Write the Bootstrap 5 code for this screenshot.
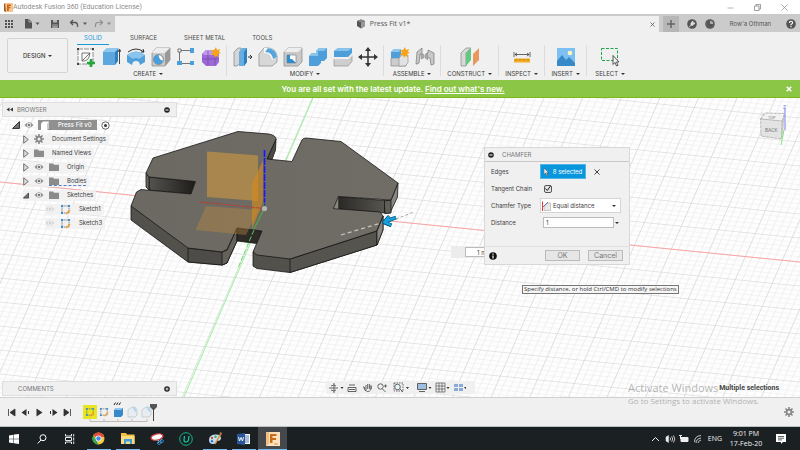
<!DOCTYPE html>
<html lang="en">
<head>
<meta charset="utf-8">
<meta name="viewport" content="width=device-width, initial-scale=1">
<title>Autodesk Fusion 360 (Education License)</title>
<link href="https://cdn.jsdelivr.net/npm/bootstrap@5.3.0/dist/css/bootstrap.min.css" rel="stylesheet">
<style>
  body { font-family: Inter, Roboto, "Liberation Sans", sans-serif; font-size: 6px; line-height: 8px; color: #3c3c3c; background: #f0f0f0; }
  svg { display: block; flex: none; }
  button, input, select { font: inherit; color: inherit; }
  .plain-btn { border: 0; background: none; padding: 0; display: flex; align-items: center; justify-content: center; }
  .titlebar { height: 16px; background: #fff; border-bottom: 2px solid #cacaca; font-family: Roboto, sans-serif; font-size: 7px; color: #8c8c8c; }
  .win-btn { margin-right: 20px; }
  .tabstrip { height: 16px; background: #cbcbcb; color: #555; }
  .quick-tools { width: 115px; }
  .doc-tab { background: #f0f0f0; font-family: "Open Sans", sans-serif; font-size: 7px; color: #555; }
  .account { width: 141px; }
  .new-tab { width: 16px; height: 16px; background: #b7b7b7; }
  .ribbon { height: 48px; background: #f0f0f0; }
  .design-btn { width: 61px; height: 35px; border: 1px solid #d4d4d4; border-radius: 2px; background: #f1f1f1; margin: 6px 5px 0 7px; font-weight: 500; }
  .ribbon-tabs { height: 13px; }
  .ribbon-tabs a { color: #4a4a4a; text-decoration: none; font-size: 6px; line-height: 12px; border-bottom: 1px solid transparent; text-align: center; margin-right: 27px; }
  .ribbon-tabs a.current { color: #1c9ad6; border-bottom: 1px solid #1c9ad6; width: 32px; margin-right: 21px; }
  .tool-group { border-right: 1px solid #dcdcdc; height: 31px; padding: 0 3px; }
  .tool-group:last-child { border-right: 0; }
  .tool-group .icon-row { height: 25px; }
  .tool-group .plain-btn { width: 25px; height: 24px; }
  .tool-group .group-name { width: 100%; height: 8px; white-space: nowrap; }
  .g-wide { width: 58px; } .g-mid { width: 46px; } .g-slim { width: 42px; }
  .caret { display: inline-block; border: 2px solid transparent; border-top-color: #333; border-bottom: 0; margin-left: 1px; vertical-align: 1px; }
  .update-bar { height: 18px; background: #8cc646; border-bottom: 1px solid #7db714; color: #fff; font-size: 8px; line-height: 12px; font-weight: 600; }
  .update-bar a { color: #fff; }
  .viewport { background: #fefefe; }
  .scene { position: absolute; inset: 0; width: 100%; height: 100%; }
  .panel-bar { width: 175px; height: 15px; background: #f0f0f0; border: 1px solid #dedede; color: #777; padding: 0 6px 0 3px; margin: 0 0 1px 2px; }
  .tree-row { height: 14px; }
  .tree-row.branch { padding-left: 23px; }
  .tree-row.leaf { padding-left: 45px; }
  .chip { background: rgba(240,240,240,.88); height: 11px; padding-right: 3px; gap: 5px; }
  .chip b { font-weight: 400; padding-left: 3px; }
  .hovered { border-bottom: 1px dashed #5b7fc4; gap: 5px; }
  .root-chip { background: #909090; color: #fff; font-weight: 500; height: 10px; padding: 0 5px 0 2px; }
  .navbar-mini { background: #f0f0f0; height: 13px; padding: 0 9px 0 2px; margin-bottom: 3px; }
  .dialog-box { position: absolute; left: 484px; top: 49px; width: 146px; background: #f0f0f0; border: 1px solid #d8d8d8; }
  .dialog-title { height: 14px; border-bottom: 1px solid #c9c9c9; color: #777; padding-left: 3px; }
  .field { height: 17px; }
  .field > label { width: 49px; flex: none; white-space: nowrap; }
  .dialog-body { padding: 1px 8px 0 6px; height: 84px; }
  .dialog-foot { padding: 3px 6px 3px 4px; }
  .pick-btn { background: #0a96dc; color: #fff; height: 15px; width: 46px; border: 1px solid #53b5e6; white-space: nowrap; }
  .type-box { background: #fff; border: 1px solid #d5d5d5; height: 15px; width: 82px; padding-left: 1px; }
  .type-box select { border: 0; background: none; appearance: none; padding: 0 0 0 2px; flex: 1; min-width: 0; }
  .dist { width: 71px; height: 11px; border: 1px solid #bcbcbc; background: #fff; padding: 0 2px; margin-left: 3px; }
  .tick { width: 8px; height: 8px; margin: 0; appearance: none; border: 1px solid #555; border-radius: 2px; background: #e4e4e4; display: inline-block; }
  .tick-wrap { position: relative; height: 8px; }
  .tick-wrap svg { position: absolute; left: 1px; top: 0; pointer-events: none; }
  .act { width: 35px; height: 11px; border: 1px solid #bbb; background: #e6e6e6; color: #777; padding: 0; font-size: 7px; line-height: 9px; }
  .mini-input { position: absolute; left: 451px; top: 148px; background: #ececec; height: 12px; padding: 1px 0 1px 14px; }
  .mini-input input { width: 24px; height: 10px; border: 1px solid #bbb; background: #fff; padding: 0 0 0 11px; }
  .tip { position: absolute; left: 522px; top: 187px; height: 9px; border: 1px solid #777; background: #f6f6f6; padding: 0 1px; line-height: 7px; white-space: nowrap; color: #333; font-family: "Open Sans", sans-serif; }
  .ghost-note { position: absolute; left: 628px; bottom: -10px; color: rgba(120,120,120,.55); font-family: "Open Sans", sans-serif; font-size: 8px; line-height: 12px; z-index: 3; white-space: nowrap; }
  .ghost-note strong { display: block; font-weight: 400; font-size: 11px; line-height: 14px; }
  .side { flex: 1 1 0; min-width: 0; }
  .picked { font-family: Roboto, sans-serif; font-size: 7px; font-weight: 700; color: #444; padding: 0 21px 5px 0; position: relative; z-index: 4; }
  .timeline { height: 30px; background: #f0f0f0; border-top: 1px solid #d0d0d0; border-bottom: 1px solid #bdc4c6; }
  .timeline .plain-btn { width: 14px; height: 14px; }
  .taskbar { height: 23px; background: #1b2023; color: #f2f2f2; font-family: "Open Sans", sans-serif; font-size: 7px; }
  .taskbar .plain-btn { width: 29px; height: 23px; }
  .taskbar .plain-btn.first { width: 28px; }
  .taskbar .plain-btn.open { background: linear-gradient(#76b9ed, #76b9ed) bottom / 24px 1px no-repeat; }
  .taskbar .plain-btn.active { background: linear-gradient(#76b9ed, #76b9ed) bottom / 100% 1px no-repeat #46494b; }
  .clock { line-height: 10px; width: 40px; }
  .notice { margin: 0 14px 0 10px; }
</style>
<script src="https://cdn.jsdelivr.net/npm/bootstrap@5.3.0/dist/js/bootstrap.bundle.min.js"></script>
</head>
<body>
<svg width="0" height="0" class="position-absolute" aria-hidden="true">
  <symbol id="eye" viewBox="0 0 10 8"><path d="M.5 4Q5-1.500 9.500 4 5 9.500.5 4Z" fill="#8c8c8c"/><circle cx="5" cy="4" r="2.200" fill="#f0f0f0"/><circle cx="5" cy="4" r="1.300" fill="#777"/></symbol>
  <symbol id="folder" viewBox="0 0 10 8"><path d="M0 .5h4l1 1.200h5V8H0Z" fill="#8b8b8b"/></symbol>
  <symbol id="closed" viewBox="0 0 6 9"><path d="M.7.8 5.300 4.500.7 8.200Z" fill="#ddd" stroke="#555" stroke-width=".8"/></symbol>
  <symbol id="opened" viewBox="0 0 7 7"><path d="M6.500.5v6h-6Z" fill="#777" stroke="#222" stroke-width=".8"/></symbol>
  <symbol id="sketch" viewBox="0 0 11 11"><path d="M2 2h7v7H2Z" fill="none" stroke="#555" stroke-width=".7" stroke-dasharray="1.500 .7"/><path d="M1 1h2v2H1ZM8 1h2v2H8ZM1 8h2v2H1Z" fill="#3c8fd0"/><path d="m5.500 9.500 4-4 1 1-4 4Z" fill="#f39b35"/></symbol>
  <symbol id="cog" viewBox="0 0 10 10"><path d="M5 0v10M0 5h10M1.500 1.500l7 7M8.500 1.500l-7 7" stroke="#888" stroke-width="1.600"/><circle cx="5" cy="5" r="3.300" fill="#888"/><circle cx="5" cy="5" r="1.500" fill="#f0f0f0"/></symbol>
</svg>

<div class="d-flex flex-column vh-100 overflow-hidden">
  <header class="titlebar d-flex align-items-center px-1 flex-shrink-0">
    <svg width="9" height="9" viewBox="0 0 9 9"><path d="M1 0h8v9H1Z" fill="#f8c48e"/><path d="M1 0 0 1v7l2 1Z" fill="#9b5b26"/><path d="M3 1.500h4v1.500H4.800v1H6.500v1.300H4.800V8H3Z" fill="#c96713"/></svg>
    <span class="flex-grow-1">Autodesk Fusion 360 (Education License)</span>
    <button class="plain-btn win-btn" aria-label="Minimize"><svg width="7" height="7" viewBox="0 0 7 7"><path d="M.5 4h6" stroke="#999" stroke-width=".7"/></svg></button>
    <button class="plain-btn win-btn" aria-label="Restore"><svg width="7" height="7" viewBox="0 0 7 7"><path d="M.5 2h4.500v4.500H.5ZM2 2V.5h4.500V5H5" fill="none" stroke="#777" stroke-width=".7"/></svg></button>
    <button class="plain-btn me-2" aria-label="Close"><svg width="7" height="7" viewBox="0 0 7 7"><path d="m.5.5 6 6m0-6-6 6" stroke="#888" stroke-width=".7"/></svg></button>
  </header>

  <div class="tabstrip d-flex flex-shrink-0">
    <div class="quick-tools d-flex align-items-center">
      <svg width="115" height="14" viewBox="0 0 115 14"><g fill="#555"><path d="M5 3h2v2H5Zm3 0h2v2H8Zm3 0h2v2h-2ZM5 6h2v2H5Zm3 0h2v2H8Zm3 0h2v2h-2ZM5 9h2v2H5Zm3 0h2v2H8Zm3 0h2v2h-2ZM25 2h4l3 3v6.500h-7Z"/><path d="M29 2v3h3" fill="none" stroke="#ccc" stroke-width=".7"/><path d="m35.500 5.500 4 0-2 2.500ZM83 5.500h4L85 8Z"/><path d="M107 5.500h4L109 8Z" fill="#888"/><path d="M51 3h8v8h-8Z"/><path d="M53 3h4v2.500h-4ZM52.500 7.500h5V11h-5Z" fill="#bbb"/><path d="M53 8.500h4M53 10h4" stroke="#555" stroke-width=".6"/></g><path d="m73 3-2.500 2.500L73 8M71 5.500h4q3 0 2.500 4.500" fill="none" stroke="#555" stroke-width="1.300"/><path d="m100 3 2.500 2.500L100 8M102 5.500h-4q-3 0-2.500 4.500" fill="none" stroke="#909090" stroke-width="1.200"/></svg>
    </div>
    <div class="doc-tab flex-grow-1 d-flex align-items-center justify-content-center position-relative">
      <svg width="10" height="10" viewBox="0 0 10 10" class="me-1"><path d="M1 2 5 .5 9 2v5L5 9.500 1 7Z" fill="#555"/><path d="M1 2 5 3.500 9 2 5 .5Z" fill="#888"/><path d="M5 3.500 9 2v5L5 9.500Z" fill="#999"/></svg>
      <span class="me-2">Press Fit v1*</span>
      <button class="plain-btn position-absolute end-0 me-1" aria-label="Close tab"><svg width="5" height="5" viewBox="0 0 5 5"><path d="m.5.5 4 4m0-4-4 4" stroke="#555" stroke-width=".8"/></svg></button>
    </div>
    <div class="account d-flex align-items-center ps-1">
      <button class="new-tab plain-btn" aria-label="New tab"><svg width="8" height="8" viewBox="0 0 8 8"><path d="M4 0v8M0 4h8" stroke="#666" stroke-width="1.500"/></svg></button>
      <svg class="ms-2" width="10" height="10" viewBox="0 0 10 10"><circle cx="5" cy="5" r="4.800" fill="#555"/><path d="M2 8 5 5.500M4 4l2-2v2h2L6 6.200H4Z" stroke="#ddd" fill="#ddd" stroke-width=".8"/></svg>
      <svg class="ms-2" width="10" height="10" viewBox="0 0 10 10"><circle cx="5" cy="5" r="4.800" fill="#555"/><circle cx="5" cy="5" r="3.300" fill="#aaa"/><path d="M5 1.700V5h3.300A3.300 3.300 0 1 1 5 1.700Z" fill="#555"/></svg>
      <span class="flex-grow-1 text-center text-nowrap">Row'a Othman</span>
      <svg class="me-1" width="10" height="10" viewBox="0 0 10 10"><circle cx="5" cy="5" r="4.800" fill="#555"/><path d="M3.400 4Q3.400 2.300 5 2.300t1.600 1.500Q6.600 4.700 5 5.500v.7M5 7v1.200" fill="none" stroke="#fff" stroke-width="1.100"/></svg>
    </div>
  </div>

  <div class="ribbon d-flex flex-shrink-0">
    <button class="design-btn flex-shrink-0">DESIGN <i class="caret"></i></button>
    <div class="flex-grow-1">
      <nav class="ribbon-tabs d-flex">
        <a class="current ms-1" href="#">SOLID</a>
        <a href="#">SURFACE</a>
        <a href="#">SHEET METAL</a>
        <a href="#">TOOLS</a>
      </nav>
      <div class="d-flex">
        <section class="tool-group ps-0">
          <div class="icon-row d-flex">
            <button class="plain-btn" aria-label="Create sketch"><svg width="20" height="20" viewBox="0 0 20 20"><path d="M2 2h15v15H2Z" fill="#fafafa" stroke="#777" stroke-width=".8" stroke-dasharray="5 1"/><path d="M1 1h2v2H1ZM16 1h2v2h-2ZM1 16h2v2H1Z" fill="#444"/><path d="M6 6v8q7 1 8-8ZM6 14 14 6" fill="none" stroke="#555" stroke-width=".8"/><path d="M15 12v8M11 16h8" stroke="#23a63c" stroke-width="2.600"/></svg></button>
            <button class="plain-btn" aria-label="Extrude"><svg width="20" height="20" viewBox="0 0 20 20"><path d="M2 5 6 1h12l-4 4v13H2Z" fill="#5ca8de"/><path d="M2 5 6 1h12l-4 4Z" fill="#8fc8ef"/><path d="M14 5 17 2v12l-3 4Z" fill="#2d7fbe"/><path d="M18.500 17V3m-1.500 2 1.500-3L20 5" fill="none" stroke="#333" stroke-width=".9"/></svg></button>
            <button class="plain-btn" aria-label="Revolve"><svg width="20" height="20" viewBox="0 0 20 20"><path d="M1 8Q10 1 19 8v7l-5 3-1-3q-3-2-6 0l-1 3-5-3Z" fill="#4f9fd9"/><path d="M1 8Q10 1 19 8l-6 4q-3-2-6 0Z" fill="#88c4ed"/><path d="M2 5Q10-1 18 5m-1-3 1 3-3 0" fill="none" stroke="#333" stroke-width="1"/></svg></button>
            <button class="plain-btn" aria-label="Hole"><svg width="20" height="20" viewBox="0 0 20 20"><path d="m1 6 4-5h14v12l-5 6H1Z" fill="#c7c9ca" stroke="#888" stroke-width=".7"/><path d="M1 6 5 1h14l-5 5Z" fill="#ececec"/><path d="m14 6 5-5v12l-5 6Z" fill="#999"/><circle cx="7.500" cy="12.500" r="4.800" fill="#fff" stroke="#666" stroke-width=".8"/><path d="M7.500 7.700a4.800 4.800 0 1 0 4.500 6Q8 13 7.500 7.700Z" fill="#4a9edb"/></svg></button>
            <button class="plain-btn" aria-label="Pattern"><svg width="20" height="20" viewBox="0 0 20 20"><path d="M5 3.500h10M3.500 5v10M5 16.500h10" stroke="#555" stroke-width=".8" fill="none"/><path d="M2 2h3v3H2Z" fill="#fff" stroke="#555" stroke-width=".8"/><path d="M14 1h4v5h-4ZM1 14h5v4H1ZM14 14h4v4h-4Z" fill="#4a9edb"/></svg></button>
            <button class="plain-btn" aria-label="Create form"><svg width="20" height="20" viewBox="0 0 20 20"><path d="m1 7 4-4h9l4 4v8l-3 4H5l-4-4Z" fill="#9b6ad4"/><path d="m1 7 4-4h9l1 3-3 2H4Z" fill="#c09ae9"/><path d="M7 4v14M1 12h16M14 7v11" stroke="#7543b2" stroke-width=".7"/><path d="m15 0 1 3 3-1-1 3 2 1-3 1 1 3-3-1-1 2-1-3-3 0 2-3-2-2 3 0Z" fill="#f6a21b"/></svg></button>
          </div>
          <div class="group-name text-center">CREATE <i class="caret"></i></div>
        </section>
        <section class="tool-group">
          <div class="icon-row d-flex">
            <button class="plain-btn" aria-label="Press pull"><svg width="20" height="20" viewBox="0 0 20 20"><path d="m1 5 4-4h3v14l-4 4H1Z" fill="#d5d5d5" stroke="#777" stroke-width=".6"/><path d="m6 5 3-4h5v14l-3 4H6Z" fill="#65aee2"/><path d="m11 5 3-4v14l-3 4Z" fill="#2d7fbe"/><path d="M15 10h4m-2-2 2 2-2 2" stroke="#333" fill="none"/></svg></button>
            <button class="plain-btn" aria-label="Fillet"><svg width="20" height="20" viewBox="0 0 20 20"><path d="M1 7 6 1h5q7 1 8 8v6l-5 4H1Z" fill="#d7d7d7" stroke="#888" stroke-width=".7"/><path d="M6 1h5q7 1 8 9l-5 3q-1-7-8-7Z" fill="#fafafa"/><path d="M10 1q8 1 9 9l-4 2Q14 5 7 5Z" fill="#55a5dc"/></svg></button>
            <button class="plain-btn" aria-label="Shell"><svg width="20" height="20" viewBox="0 0 20 20"><path d="m1 5 4-4h14v14l-4 4H1Z" fill="#c9c9c9" stroke="#888" stroke-width=".7"/><path d="M1 5 5 1h14l-4 4Z" fill="#eee"/><path d="M4 8h9v8H4Z" fill="#f6f9fb" stroke="#777" stroke-width=".6"/><path d="M4 8v8h9l-4-4H7V8Z" fill="#2f8ccd"/></svg></button>
            <button class="plain-btn" aria-label="Combine"><svg width="20" height="20" viewBox="0 0 20 20"><path d="M1 9 4 6h4V4l3-3h8v10l-3 3h-3v2l-3 3H1Z" fill="#4e9fd9"/><path d="M1 9 4 6h4V4l3-3h8l-3 3h-6v5Z" fill="#88c3ec"/></svg></button>
            <button class="plain-btn" aria-label="Split body"><svg width="20" height="20" viewBox="0 0 20 20"><path d="m1 4 4-3h14v5l-4 4H1Z" fill="#4e9fd9"/><path d="m1 4 4-3h14l-4 3Z" fill="#88c3ec"/><path d="m1 12 14-.5 4-3v6l-4 4.500H1Z" fill="#cecece" stroke="#888" stroke-width=".6"/><path d="m1 12 14-.5 4-3" fill="none" stroke="#fff"/></svg></button>
            <button class="plain-btn" aria-label="Move"><svg width="20" height="20" viewBox="0 0 20 20"><path d="M10 3v14M3 10h14" stroke="#333" stroke-width="1.500"/><path d="m10 0 3 4H7ZM10 20l3-4H7ZM0 10l4-3v6ZM20 10l-4-3v6Z" fill="#333"/></svg></button>
          </div>
          <div class="group-name text-center">MODIFY <i class="caret"></i></div>
        </section>
        <section class="tool-group">
          <div class="icon-row d-flex">
            <button class="plain-btn" aria-label="New component"><svg width="20" height="20" viewBox="0 0 20 20"><path d="M1 11h15v8H1Z" fill="#ccc" stroke="#888" stroke-width=".7"/><path d="m9 11 3-3h6v8l-3 3H9Z" fill="#e2e2e2" stroke="#888" stroke-width=".6"/><path d="m1 5 3-3h7v6l-2 3H1Z" fill="#4e9fd9"/><path d="m1 5 3-3h7L9 5Z" fill="#8fc8ef"/><path d="m15 0 1 3 3-1-1 3 2 1-3 1 1 3-3-1-1 2-1-3-3 0 2-3-2-2 3 0Z" fill="#f6a21b"/></svg></button>
            <button class="plain-btn" aria-label="Joint"><svg width="20" height="20" viewBox="0 0 20 20"><path d="m2 5 5-4v6H5l-1 9-2 1H1ZM13 3l6 3v11l-3 1-1-7-3-1V6h1Z" fill="#c6c8ca" stroke="#777" stroke-width=".7"/><path d="M6 7q3-1 3 2t-3 3ZM12 6q-3 1-2 5l3 2Z" fill="#aaa" stroke="#888" stroke-width=".5"/></svg></button>
          </div>
          <div class="group-name text-center">ASSEMBLE <i class="caret"></i></div>
        </section>
        <section class="tool-group g-wide">
          <div class="icon-row d-flex justify-content-center">
            <button class="plain-btn" aria-label="Construct plane"><svg width="20" height="20" viewBox="0 0 20 20"><path d="m1 6 5-5h5L6 6v13H1Z" fill="#d8d8d8" stroke="#888" stroke-width=".7"/><path d="m6 6 5-5v12l-5 6Z" fill="#5fca80"/><path d="m13 7 6-6v12l-6 6Z" fill="#e9995f"/></svg></button>
          </div>
          <div class="group-name text-center">CONSTRUCT <i class="caret"></i></div>
        </section>
        <section class="tool-group g-mid">
          <div class="icon-row d-flex justify-content-center">
            <button class="plain-btn" aria-label="Measure"><svg width="18" height="20" viewBox="0 0 18 20"><path d="M1 5v5M17 5v5M2 7.500h14M4 6 2 7.500 4 9M14 6l2 1.500L14 9" stroke="#444" stroke-width=".8" fill="none"/><path d="M1 11.500h16v4H1Z" fill="#f5ac27"/><path d="M3 12v2m2-2v1m2-1v2m2-2v1m2-1v2m2-2v1m2-1v2" stroke="#925d00" stroke-width=".5"/></svg></button>
          </div>
          <div class="group-name text-center">INSPECT <i class="caret"></i></div>
        </section>
        <section class="tool-group g-slim">
          <div class="icon-row d-flex justify-content-center">
            <button class="plain-btn" aria-label="Insert image"><svg width="18" height="18" viewBox="0 0 18 18"><path d="M0 0h18v18H0Z" fill="#7cbff3"/><path d="m0 13 5-6 4 5 3-3 6 6v3H0Z" fill="#3789c8"/><circle cx="13" cy="5" r="2.300" fill="#fdf6bb"/></svg></button>
          </div>
          <div class="group-name text-center">INSERT <i class="caret"></i></div>
        </section>
        <section class="tool-group g-mid">
          <div class="icon-row d-flex justify-content-center">
            <button class="plain-btn" aria-label="Select"><svg width="20" height="20" viewBox="0 0 20 20"><path d="M1.500 1.500h16v12h-16Z" fill="none" stroke="#1fa64a" stroke-dasharray="3 1.500"/><path d="M13 8.500v9l2-2 1.500 3.500 1.500-.7-1.500-3.300H19Z" fill="#eee" stroke="#333" stroke-width=".8"/></svg></button>
          </div>
          <div class="group-name text-center">SELECT <i class="caret"></i></div>
        </section>
      </div>
    </div>
  </div>

  <div class="update-bar d-flex align-items-center flex-shrink-0">
    <div class="flex-grow-1 text-center">You are all set with the latest update. <a href="#">Find out what's new.</a></div>
    <button class="plain-btn me-2" aria-label="Dismiss"><svg width="6" height="6" viewBox="0 0 6 6"><path d="m.7.7 4.600 4.600m0-4.600L.7 5.300" stroke="#fff" stroke-width="1.400"/></svg></button>
  </div>

  <main class="viewport flex-grow-1 position-relative d-flex flex-column">
    <svg class="scene" viewBox="0 98 800 299" preserveAspectRatio="xMidYMid slice" aria-label="Model view">
      <defs>
        <pattern id="grid" width="50" height="50" patternUnits="userSpaceOnUse" patternTransform="matrix(.74 .074 -.2 .46 264 208)">
          <path d="M10 0v50M20 0v50M30 0v50M40 0v50M0 10h50M0 20h50M0 30h50M0 40h50" stroke="#efeff0" stroke-width="1.400"/>
          <path d="M0 .6h50M.6 0v50" stroke="#d2d2d4" stroke-width="1.200"/>
        </pattern>
        <linearGradient id="top" x1="0" x2="1" y1="0" y2="0"><stop offset="0" stop-color="#6c6963"/><stop offset="1" stop-color="#706d66"/></linearGradient>
        <linearGradient id="slot" x1="0" x2="1" y1="0" y2="0"><stop offset="0" stop-color="#55534e"/><stop offset="1" stop-color="#1d1c1a"/></linearGradient>
        <linearGradient id="slot2" x1="0" x2="1" y1="0" y2="0"><stop offset="0" stop-color="#252421"/><stop offset="1" stop-color="#57554f"/></linearGradient>
      </defs>
      <rect y="98" width="800" height="299" fill="url(#grid)"/>
      <path d="M0 182 800 262" stroke="#ff9c9c" stroke-width=".9"/>
      <path d="M313 98 184 397" stroke="#8ff08f" stroke-width=".9"/>
      <g stroke="#171716" stroke-width=".8" stroke-linejoin="round">
        <path d="M131 206v14l57 42 34 3 5-2 10-22 3-14ZM253 252v14l4 2.500 33 4 87-27.500 6-15v-14l-7 13Z" fill="#53514c"/>
        <path d="M290 259v13.500l87-27.500v-14Z" fill="#56544f"/><path d="m377 231 6-15v14l-6 15Z" fill="#8a8780"/>
        <path d="m188 248v14l34 3 5-2v-14l-5 3Z" fill="#4e4c48"/><path d="M222 252v13l5-2 10-22v-13l-10 22Z" fill="#64615b"/>
        <path d="m237 228 25 3-5 12.500-20-2.500Z" fill="#2c2b28"/>
        <path d="m267 159 9-20-.5 11-3.500 9.500Z" fill="#4b4944"/>
        <path d="m398 183-7 17-7 1v12h6l7.500-16Z" fill="#8a8780"/><path d="m384 201 7-1v13l-6 .5Z" fill="#605e58"/>
        <path d="m149 177 46.500 4.500L191 194l-42-4Z" fill="url(#slot)"/><path d="m146 173 3 4v13l-3-3Z" fill="#6a6761"/>
        <path d="m338.500 196.500 46 4V213l-51-4.500Z" fill="url(#slot2)"/>
        <path d="m153 158 85-26.500 31 2.500q7 1.500 7 5l-9 20 25 2.500 10-21.500q1-2 4-2l35 3.500 57 41.500-7 17-52.500-3.500-5 12 46.500 3.500 3 4-6.300 15L290 259l-33-4-4-3 9-21-25-3-10 21.500-5 2.500-34-4-57-42 5.500-14 4.500-2.500L191 194l4.500-12.500L149 177l-3-4Z" fill="url(#top)"/>
        <path d="m338.500 196.500-5 12 5 .5Z" fill="#8a867c" stroke-width=".4"/>
      </g>
      <path d="m207 151.500 51 4V201l-51-4Z" fill="#dfa13a" fill-opacity=".52"/>
      <path d="m206 206 52 4-12 25-50.500-5Z" fill="#c18c3b" fill-opacity=".38"/>
      <path d="m252 184 11-24v42l-11 27Z" fill="#d28a1d" fill-opacity=".65"/>
      <path d="m200 202 64 6.500" stroke="#ba3c32" stroke-width=".9" stroke-dasharray="9 1 3 1"/>
      <path d="m264 209-10 20" stroke="#3ec43e" stroke-width=".9"/><path d="m254 230-16 38" stroke="#62d762" stroke-width=".9" stroke-dasharray="5 2"/>
      <path d="M264.500 150v52" stroke="#1717ff" stroke-width="1.600" stroke-dasharray="7 1"/><path d="M264.500 202v4" stroke="#2b3fa8"/>
      <circle cx="264.500" cy="208.500" r="2.600" fill="#b5b5b0"/>
      <path d="m341 235 40-12" stroke="#c4c2bd" stroke-width="1.300" stroke-dasharray="4 3"/><path d="m396 219 18-7" stroke="#aaa" stroke-dasharray="3 2"/>
      <path d="m396 217.500-10 3.800m3.500-5-5.500 6 7.500 3" fill="none" stroke="#07567f" stroke-width="4" stroke-linejoin="round"/><path d="m395.500 217.700-9.500 3.600m3.300-4.600-5 5.400 7 2.900" fill="none" stroke="#18a0dc" stroke-width="2.500" stroke-linejoin="round"/>
      <g>
        <path d="m761 112 24 3-2 24-22-2Z" fill="#c8c8c8" opacity=".35"/>
        <path d="m760.500 119 5-6 19 .5-2.500 8Z" fill="#f2f2f2" stroke="#888" stroke-width=".6" stroke-dasharray="3 1"/>
        <path d="m760.500 119 21.500 2-.5 18-20.500-3Z" fill="#e3e3e3" stroke="#999" stroke-width=".6" stroke-dasharray="3 1"/>
        <path d="m782 121 2.500-7.500-1.500 17-1.500 8Z" fill="#c3c3c3"/>
        <text x="765" y="132" font-size="5" fill="#777" font-family="Roboto">BACK</text><text x="768" y="118.500" font-size="4" fill="#888" font-family="Roboto">TOP</text>
        <path d="M785 108v22" stroke="#8080f0"/><path d="m784 130-3 15" stroke="#7aec7a"/><text x="783" y="109" font-size="5" fill="#8080f0" font-family="Roboto">Z</text>
      </g>
    </svg>

    <div class="position-relative flex-grow-1 pt-1">
      <div class="panel-bar d-flex align-items-center">
        <svg width="7" height="5" viewBox="0 0 7 5"><path d="M3.500.5v4l-3-2ZM7 .5v4l-3-2Z" fill="#333"/></svg>
        <span class="flex-grow-1 ps-1">BROWSER</span>
        <svg width="6" height="6" viewBox="0 0 6 6"><circle cx="3" cy="3" r="2.800" fill="#222"/><path d="M1.500 3h3" stroke="#fff"/></svg>
      </div>
      <ul class="list-unstyled mb-0">
        <li class="tree-row d-flex align-items-center ps-2 ms-1">
          <svg width="8" height="8"><use href="#opened"/></svg>
          <svg class="ms-1 me-1" width="10" height="8"><use href="#eye"/></svg>
          <span class="root-chip d-flex align-items-center"><svg width="10" height="9" viewBox="0 0 10 9" class="me-2"><path d="m1 2.500 2-2h6V7L7 9H1Z" fill="#fff"/><path d="m7 2.500 2-2V7L7 9Z" fill="#ccc"/></svg>Press Fit v0</span>
          <svg class="ms-1" width="9" height="9" viewBox="0 0 9 9"><circle cx="4.500" cy="4.500" r="3.700" fill="#f7f7f7" stroke="#444" stroke-width=".8"/><circle cx="4.500" cy="4.500" r="1.500" fill="#333"/></svg>
        </li>
        <li class="tree-row branch d-flex align-items-center"><span class="chip d-flex align-items-center"><svg width="6" height="9"><use href="#closed"/></svg><svg width="10" height="10"><use href="#cog"/></svg><b>Document Settings</b></span></li>
        <li class="tree-row branch d-flex align-items-center"><span class="chip d-flex align-items-center"><svg width="6" height="9"><use href="#closed"/></svg><svg width="10" height="8"><use href="#folder"/></svg><b>Named Views</b></span></li>
        <li class="tree-row branch d-flex align-items-center"><span class="chip d-flex align-items-center"><svg width="6" height="9"><use href="#closed"/></svg><svg width="10" height="8"><use href="#eye"/></svg><svg width="10" height="8"><use href="#folder"/></svg><b>Origin</b></span></li>
        <li class="tree-row branch d-flex align-items-center"><span class="chip d-flex align-items-center"><svg width="6" height="9"><use href="#closed"/></svg><svg width="10" height="8"><use href="#eye"/></svg><span class="hovered d-flex"><svg width="10" height="8"><use href="#folder"/></svg><b>Bodies</b></span></span></li>
        <li class="tree-row branch d-flex align-items-center"><span class="chip d-flex align-items-center"><svg width="6" height="7"><use href="#opened"/></svg><svg width="10" height="8"><use href="#eye"/></svg><svg width="10" height="8"><use href="#folder"/></svg><b>Sketches</b></span></li>
        <li class="tree-row leaf d-flex align-items-center"><span class="chip d-flex align-items-center"><svg class="opacity-25" width="10" height="8"><use href="#eye"/></svg><svg width="11" height="11"><use href="#sketch"/></svg><b>Sketch1</b></span></li>
        <li class="tree-row leaf d-flex align-items-center"><span class="chip d-flex align-items-center"><svg class="opacity-25" width="10" height="8"><use href="#eye"/></svg><svg width="11" height="11"><use href="#sketch"/></svg><b>Sketch3</b></span></li>
      </ul>
    </div>

    <div class="position-relative d-flex align-items-end">
      <div class="side"><div class="panel-bar d-flex align-items-center"><span class="flex-grow-1 ps-2 ms-1">COMMENTS</span><svg width="6" height="6" viewBox="0 0 6 6"><circle cx="3" cy="3" r="2.800" fill="#222"/><path d="M1.500 3h3M3 1.500v3" stroke="#fff" stroke-width=".8"/></svg></div></div>
      <div class="navbar-mini">
        <svg width="138" height="13" viewBox="327 381 138 13"><g fill="none" stroke="#555" stroke-width=".9"><path d="M333 383v10M328 388h9M330 386q3-2 5 0M330 390q3 2 5 0"/><path d="M348 385h6M347 387.500h8v4h-8ZM348 389.500h6"/><path d="m364 389-1-2m2 3v-5m1.700 4v-5m1.700 5v-5m1.600 5v-3.500q1 6-3.500 6-3 0-4-5"/><circle cx="379.500" cy="386.500" r="2.700"/><path d="m381.500 389 3 3M383 386h3m-1.500-1.500v3"/><path d="M393 383h9v8h-9Z" stroke-dasharray="1.500 1"/><circle cx="396.500" cy="387" r="2.800" fill="#e5f4f7"/><path d="m399 389 3 3"/><path d="M416.500 383.500h9v6h-9Z" fill="#9cbee1"/><path d="M418 391.500h6"/><path d="M435 383h9v9h-9ZM438 383v9m3-9v9M435 386h9m-9 3h9" stroke-width=".7"/></g><path d="M453 384h4v3h-4ZM458 384h4v3h-4ZM453 388h4v3h-4ZM458 388h4v3h-4Z" fill="#8aabd6"/><path d="M339.500 387h3l-1.500 2ZM405 387h3l-1.500 2ZM427.500 387h3l-1.500 2ZM445.500 387h3l-1.500 2ZM463 387h3l-1.500 2Z" fill="#333"/></svg>
      </div>
      <div class="side"><div class="picked text-end">Multiple selections</div></div>
    </div>

    <div class="mini-input"><input type="text" value="1 mm" aria-label="Distance on canvas"></div>

    <section class="dialog-box" role="dialog" aria-label="Chamfer">
      <div class="dialog-title d-flex align-items-center"><svg class="me-2" width="6" height="6" viewBox="0 0 6 6"><circle cx="3" cy="3" r="2.800" fill="#222"/><path d="M1.500 3h3" stroke="#fff"/></svg>CHAMFER</div>
      <div class="dialog-body">
        <div class="field d-flex align-items-center"><label for="edges">Edges</label><button id="edges" class="pick-btn plain-btn"><svg class="me-1" width="5" height="8" viewBox="0 0 5 8"><path d="M0 0v6.500L1.500 5l1.200 2.700 1-.5L2.500 4.700h2.300Z" fill="#e8e8e8" stroke="#333" stroke-width=".4"/></svg>8 selected</button><button class="plain-btn ms-1 ps-1" aria-label="Clear edges"><svg width="6" height="6" viewBox="0 0 6 6"><path d="m.5.5 5 5m0-5-5 5" stroke="#444"/></svg></button></div>
        <div class="field d-flex align-items-center"><label for="tangent">Tangent Chain</label><span class="tick-wrap d-flex align-items-center ms-1"><input class="tick" id="tangent" type="checkbox" checked><svg width="7" height="7" viewBox="0 0 7 7"><path d="m.5 3.500 1.800 2L5.500 1" fill="none" stroke="#222"/></svg></span></div>
        <div class="field d-flex align-items-center"><label for="ctype">Chamfer Type</label><div class="type-box d-flex align-items-center"><svg width="9" height="10" viewBox="0 0 9 10"><path d="M.5 10V.5" stroke="#e33"/><path d="M2 9.500V6l4-4h2.500v7.500Z" fill="#e8e8e8" stroke="#999" stroke-width=".5"/><path d="m1 6 5-5" stroke="#335a9c" stroke-width=".8"/></svg><select id="ctype"><option>Equal distance</option></select><i class="caret me-1"></i></div></div>
        <div class="field d-flex align-items-center"><label for="dist">Distance</label><input id="dist" class="dist" type="text" value="1"><i class="caret"></i></div>
      </div>
      <div class="dialog-foot d-flex align-items-center border-top">
        <svg width="8" height="8" viewBox="0 0 8 8"><circle cx="4" cy="4" r="3.800" fill="#111"/><path d="M4 3.500v3M4 1.500v1.200" stroke="#fff" stroke-width="1.200"/></svg>
        <button class="act ms-auto me-1">OK</button><button class="act ms-1">Cancel</button>
      </div>
    </section>
    <div class="tip" role="tooltip">Specify distance, or hold Ctrl/CMD to modify selections</div>
    <div class="ghost-note"><strong>Activate Windows</strong>Go to Settings to activate Windows.</div>
  </main>

  <div class="timeline d-flex align-items-center flex-shrink-0 ps-1">
    <button class="plain-btn" aria-label="To start"><svg width="9" height="9" viewBox="0 0 9 9"><path d="M1.500 1v7M8 1v7L3 4.500Z" fill="#333" stroke="#333" stroke-width=".8"/></svg></button>
    <button class="plain-btn" aria-label="Step back"><svg width="9" height="9" viewBox="0 0 9 9"><path d="M5.500 1v7L.5 4.500Z" fill="#333"/><path d="M7.500 3v3" stroke="#333"/></svg></button>
    <button class="plain-btn" aria-label="Play"><svg width="9" height="9" viewBox="0 0 9 9"><path d="M1.500.5v8l6-4Z" fill="#333"/></svg></button>
    <button class="plain-btn" aria-label="Step forward"><svg width="9" height="9" viewBox="0 0 9 9"><path d="M3.500 1v7l5-3.500Z" fill="#333"/><path d="M1.500 3v3" stroke="#333"/></svg></button>
    <button class="plain-btn" aria-label="To end"><svg width="9" height="9" viewBox="0 0 9 9"><path d="M7.500 1v7M1 1v7l5-3.500Z" fill="#333" stroke="#333" stroke-width=".8"/></svg></button>
    <div class="ms-2"><svg width="77" height="27" viewBox="82 399 77 27">
      <path d="M83 405h14v14H83Z" fill="#e8e622"/><use href="#sketch" x="85" y="407" width="10" height="10"/><use href="#sketch" x="99" y="407" width="10" height="10"/>
      <path d="m114 410 2-2h7v7l-2 2h-7Z" fill="#3889ca"/><path d="m114 410 2-2h7l-2 2Z" fill="#8fc8ef"/><path d="m114 405 1.500-2.500m1 2.500 1.500-2.500m1 2.500 1.500-2.500" stroke="#222"/>
      <path d="M128 416v-6l4-3h3l2 3v5l-2 2h-7ZM142 416v-6l4-3h3l2 3v5l-2 2h-7Z" fill="#e7edf0" stroke="#b6c3ca" stroke-width=".7"/><path d="m132 407 3 0 2 4-2 1ZM146 407l3 0 2 4-2 1Z" fill="#b9d7ea"/>
      <path d="M90 419v2.500h57V419M104 419v2.500m14-2.500v2.500m14-2.500v2.500" fill="none" stroke="#bbb"/>
      <path d="M150 404h7v3l-3 3h-1l-3-3Z" fill="#555"/><path d="M153.500 408v13" stroke="#444"/>
    </svg></div>
    <button class="plain-btn ms-auto me-1" aria-label="Timeline settings"><svg width="10" height="10"><use href="#cog"/></svg></button>
  </div>

  <footer class="taskbar d-flex align-items-center flex-shrink-0">
    <button class="plain-btn first" aria-label="Start"><svg width="10" height="10" viewBox="0 0 10 10"><path d="m0 1.500 4.500-.8v4H0ZM5 .6 10 0v4.700H5ZM0 5.200h4.500v4L0 8.500ZM5 5.200h5V10l-5-.7Z" fill="#fff"/></svg></button>
    <button class="plain-btn first" aria-label="Search"><svg width="10" height="10" viewBox="0 0 10 10"><circle cx="6" cy="3.700" r="3" fill="none" stroke="#fff"/><path d="M4 6 .7 9.500" stroke="#fff"/></svg></button>
    <button class="plain-btn first" aria-label="Task view"><svg width="10" height="10" viewBox="0 0 10 10"><path d="M.5 0v2h6V0M.5 10V8h6v2M.5 3.500h6v3h-6ZM8.700 0v2.500M8.700 7.500V10M8.700 3.500v3" fill="none" stroke="#fff" stroke-width=".9"/></svg></button>
    <button class="plain-btn open" aria-label="Chrome"><svg width="13" height="13" viewBox="0 0 13 13"><circle cx="6.500" cy="6.500" r="6" fill="#f5c83b"/><path d="M6.500 6.500 1.300 3.500A6 6 0 0 1 11.700 3.500L12 5H6Z" fill="#e24a3b"/><path d="M1.300 3.500 5 8.500 6 12.500A6 6 0 0 1 1.300 3.500Z" fill="#37a657"/><circle cx="6.500" cy="6.500" r="2.900" fill="#fff"/><circle cx="6.500" cy="6.500" r="2.200" fill="#4285f4"/></svg></button>
    <button class="plain-btn open" aria-label="File Explorer"><svg width="14" height="12" viewBox="0 0 14 12"><path d="M0 0h5l1 1.500h7.500V11H0Z" fill="#f2c143"/><path d="M0 3h13.500v8H0Z" fill="#fbdc7d"/><path d="M3 11V6h8v5H9V8.500H5V11Z" fill="#3e9ce0"/></svg></button>
    <button class="plain-btn" aria-label="Snipping Tool"><svg width="14" height="12" viewBox="0 0 14 12"><ellipse cx="7" cy="4" rx="6" ry="3" fill="#fff" stroke="#d24646" stroke-width="1.300" transform="rotate(-12 7 4)"/><path d="m6 6 6 4M12 6l-5 5" stroke="#bbb"/><circle cx="9" cy="10" r="1.500" fill="none" stroke="#2388d0"/><circle cx="12" cy="8" r="1.400" fill="none" stroke="#2388d0"/></svg></button>
    <button class="plain-btn" aria-label="IObit Uninstaller"><svg width="14" height="14" viewBox="0 0 14 14"><circle cx="7" cy="7" r="6.300" fill="#15212b" stroke="#1bb380"/><path d="M5.500 4 5 8q0 2 2 2t2.500-2L10 4" fill="none" stroke="#1fc98c" stroke-width="1.200"/></svg></button>
    <button class="plain-btn open" aria-label="Paint"><svg width="14" height="13" viewBox="0 0 14 13"><path d="M1 8Q1 3 7 2.500t6 4Q12.500 9 9 9q-1 3-4 3-4 0-4-4Z" fill="#bfe0f4"/><circle cx="4" cy="6" r="1.200" fill="#e24a3b"/><circle cx="7.500" cy="4.800" r="1.200" fill="#42a851"/><circle cx="4" cy="9.200" r="1.200" fill="#3474d4"/><path d="m7 12 5-9" stroke="#e58b2b" stroke-width="1.500"/><path d="m11.500 3 .5-3 2 1-1 3Z" fill="#b77b42"/></svg></button>
    <button class="plain-btn open" aria-label="Word"><svg width="13" height="12" viewBox="0 0 13 12"><path d="M6 1h7v10H6Z" fill="#fff"/><path d="M8 3h4M8 5h4M8 7h4M8 9h4" stroke="#2b579a" stroke-width=".8"/><path d="m0 1 8-1v12l-8-1Z" fill="#2b579a"/><path d="m1.500 4 1 4L4 4.500 5.500 8l1-4" fill="none" stroke="#fff" stroke-width=".9"/></svg></button>
    <button class="plain-btn open active" aria-label="Fusion 360"><svg width="14" height="14" viewBox="0 0 14 14"><path d="M0 0h14v14H0Z" fill="#fde0bd"/><path d="M0 0v14l3-2V0Z" fill="#f4bd82"/><path d="M4 2h6.500v2H6.500v2H10v2H6.500v3H4Z" fill="#c86d17"/><path d="M8 12h4" stroke="#d99250"/></svg></button>
    <div class="ms-auto d-flex align-items-center">
      <svg width="54" height="12" viewBox="655 432 54 12"><g fill="none" stroke="#eee"><path d="m657 440 3.500-3.500L664 440"/><path d="M671 436v4l2.500 1.500v-7Z" fill="#eee" stroke-width=".5"/><path d="M675 436.500q1.200 1.500 0 3M676.700 435.300q2 2.700 0 5.400M678.500 434.500q2.500 3.500 0 7" stroke-width=".8"/><path d="M686 436.500h7v4h-7Z" fill="#eee"/><path d="M684 434.500h3M685.500 434v4" /><path d="M701 442q0-4 5-5M703 442q0-2 3-3M699.500 441q0-6 6.500-6.500" stroke-width=".8"/></g></svg>
      <span class="ms-1">ENG</span>
      <time class="clock text-center ms-1">9:01 PM<br>17-Feb-20</time>
      <svg class="notice" width="10" height="10" viewBox="0 0 10 10"><path d="M0 0h10v8H7L5 10V8H0Z" fill="#fff"/><path d="M2 2.500h6M2 4.200h6M2 5.900h4" stroke="#222" stroke-width=".7"/></svg>
    </div>
  </footer>
</div>
</body>
</html>
